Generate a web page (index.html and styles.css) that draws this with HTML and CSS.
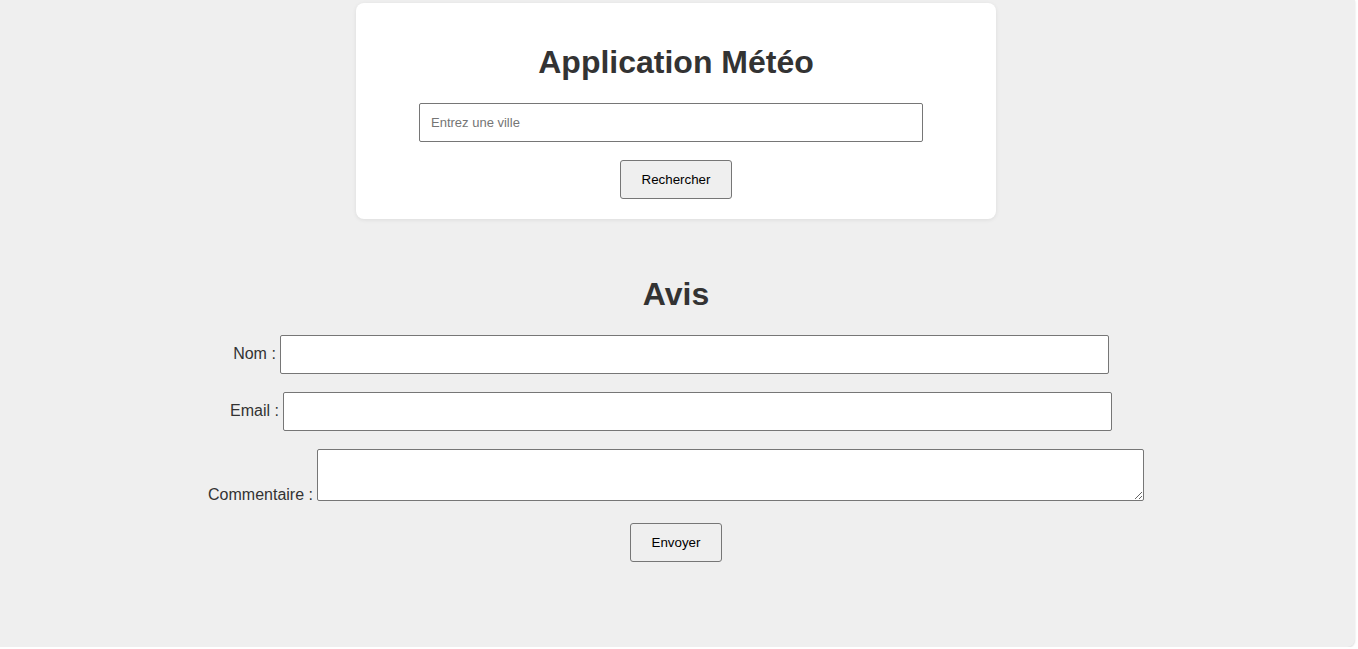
FILE: index.html
```html
<!DOCTYPE html>
<html lang="fr">
<head>
<meta charset="utf-8">
<title>Application Météo</title>
<link rel="stylesheet" href="styles.css">
</head>
<body>
<div class="page">
  <div class="card">
    <h1 class="title">Application Météo</h1>
    <input class="city" type="text" placeholder="Entrez une ville">
    <button class="btn btn-search">Rechercher</button>
  </div>

  <section class="review">
    <h2 class="title">Avis</h2>
    <form class="review-form">
      <div class="row">
        <label class="lbl" for="nom">Nom :</label>
        <input class="field" id="nom" type="text">
      </div>
      <div class="row">
        <label class="lbl" for="email">Email :</label>
        <input class="field" id="email" type="email">
      </div>
      <div class="row row-area">
        <label class="lbl" for="com">Commentaire :</label>
        <textarea class="area" id="com"></textarea>
      </div>
      <div class="actions">
        <button class="btn btn-send" type="button">Envoyer</button>
      </div>
    </form>
  </section>
</div>
</body>
</html>
```

FILE: styles.css
```css
html, body {
  margin: 0;
  padding: 0;
  background: #ffffff;
  font-family: "Liberation Sans", Arial, sans-serif;
  overflow: hidden;
}

.page {
  box-sizing: border-box;
  width: 1358px;
  height: 647px;
  margin-left: -3px;
  padding-top: 3px;
  background: #efefef;
  border-radius: 0 0 8px 0;
  box-shadow: 0 1px 2px rgba(0, 0, 0, 0.15);
}

.card {
  box-sizing: border-box;
  width: 640px;
  margin: 0 auto;
  padding: 20px;
  background: #ffffff;
  border-radius: 8px;
  box-shadow: 0 1px 4px rgba(0, 0, 0, 0.08);
  display: flex;
  flex-direction: column;
  align-items: center;
}

.title {
  margin: 21px 0 22px;
  font-size: 32px;
  font-weight: bold;
  line-height: 37px;
  color: #333333;
  text-align: center;
}

.city {
  box-sizing: border-box;
  width: 504px;
  height: 39px;
  margin: 0 10px 18px 0;
  padding: 0 11px;
  font-family: "Liberation Sans", Arial, sans-serif;
  font-size: 13px;
  color: #000;
  background: #fff;
  border: 1px solid #767676;
  border-radius: 2px;
}

.city::placeholder {
  color: #757575;
}

.btn {
  box-sizing: border-box;
  height: 39px;
  padding: 0;
  font-family: "Liberation Sans", Arial, sans-serif;
  font-size: 13.33px;
  color: #000;
  background: #efefef;
  border: 1px solid #767676;
  border-radius: 3px;
}

.btn-search {
  width: 112px;
}

.btn-send {
  width: 92px;
}

.review {
  padding-top: 30px;
}

.review .title {
  margin: 27px 0 22px;
}

.review-form {
  display: flex;
  flex-direction: column;
  align-items: center;
  gap: 18px;
}

.row {
  display: flex;
  align-items: center;
  justify-content: center;
  gap: 4px;
  padding-right: 10px;
}

.row-area {
  align-items: flex-end;
  padding-right: 0;
}

.lbl {
  font-size: 16px;
  line-height: 18px;
  color: #333333;
  padding-bottom: 2px;
}

.row-area .lbl {
  padding-bottom: 0;
  margin-bottom: -3px;
}

.field {
  box-sizing: border-box;
  width: 829px;
  height: 39px;
  padding: 0 10px;
  font-family: "Liberation Sans", Arial, sans-serif;
  font-size: 13px;
  background: #fff;
  border: 1px solid #767676;
  border-radius: 2px;
}

.area {
  box-sizing: border-box;
  width: 827px;
  height: 52px;
  padding: 2px;
  font-family: "Liberation Sans", Arial, sans-serif;
  font-size: 13px;
  background: #fff;
  border: 1px solid #767676;
  border-radius: 2px;
  resize: both;
}

.actions {
  margin-top: 4px;
  display: flex;
  justify-content: center;
}
```
